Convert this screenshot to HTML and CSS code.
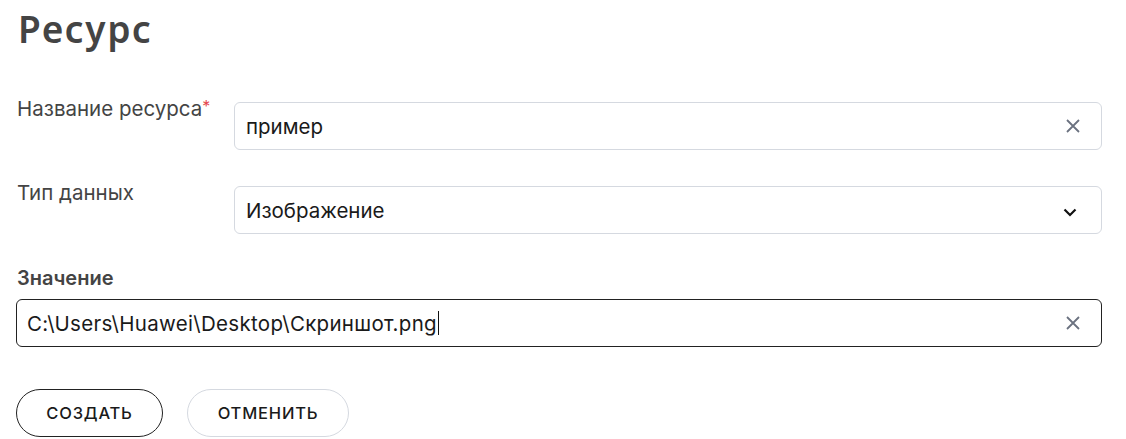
FILE: index.html
```html
<!DOCTYPE html>
<html lang="ru">
<head>
<meta charset="utf-8">
<link rel="stylesheet" href="styles.css">
</head>
<body>
<div class="page">
  <h1 class="title">Ресурс</h1>
  <div class="row row-first">
    <label class="label">Название ресурса<span class="req">*</span></label>
    <div class="field">
      <span class="value">пример</span>
      <svg class="icon-x" width="16" height="16" viewBox="0 0 16 16"><path d="M2 2L14 14M14 2L2 14" stroke="#6b7280" stroke-width="1.8" fill="none"/></svg>
    </div>
  </div>
  <div class="row">
    <label class="label">Тип данных</label>
    <div class="field">
      <span class="value">Изображение</span>
      <svg class="icon-chev" width="14" height="9" viewBox="0 0 14 9"><path d="M1.5 1.5L7 7L12.5 1.5" stroke="#111" stroke-width="2.2" fill="none"/></svg>
    </div>
  </div>
  <div class="block">
    <div class="label-bold">Значение</div>
    <div class="field field-focus">
      <span class="value value-path">C:\Users\Huawei\Desktop\Скриншот.png<span class="caret"></span></span>
      <svg class="icon-x" width="16" height="16" viewBox="0 0 16 16"><path d="M2 2L14 14M14 2L2 14" stroke="#6b7280" stroke-width="1.8" fill="none"/></svg>
    </div>
  </div>
  <div class="actions">
    <button class="btn btn-primary">СОЗДАТЬ</button>
    <button class="btn btn-secondary">ОТМЕНИТЬ</button>
  </div>
</div>
</body>
</html>
```
FILE: styles.css
```css
* { box-sizing: border-box; }
html, body { margin: 0; padding: 0; background: #fff; }
body { font-family: Inter, "Noto Sans", sans-serif; color: #1f1f1f; }
.page { width: 1102px; padding: 0 0 0 16px; }
.title {
  font-family: "Noto Sans", sans-serif;
  font-weight: 600;
  font-size: 37px;
  color: #444;
  margin: 0;
  padding-top: 3px;
  height: 54px;
  letter-spacing: 1.6px;
  padding-left: 2px;
}
.row { display: flex; align-items: flex-start; margin-top: 36px; }
.row-first { margin-top: 48px; }
.label {
  width: 218px;
  flex: none;
  font-size: 20.5px;
  color: #444;
  padding-left: 1px;
  margin-top: -6px;
  line-height: 26px;
}
.req { color: #e5484d; font-size: 16px; vertical-align: top; position: relative; top: -3px; }
.field {
  flex: 1;
  height: 48px;
  border: 1px solid #d5d9e0;
  border-radius: 6px;
  display: flex;
  align-items: center;
  justify-content: space-between;
  padding: 0 20px 0 11px;
}
.value { font-size: 20.5px; color: #1a1a1a; display: flex; align-items: center; }
.value-path { letter-spacing: 0.3px; }
.icon-chev { margin-right: 4px; margin-top: 4px; }
.block { margin-top: 31px; }
.label-bold { font-size: 20px; font-weight: 600; color: #444; padding-left: 1px; line-height: 26px; margin-bottom: 8px; }
.field-focus { border-color: #222; padding-left: 10px; }
.caret { display: inline-block; width: 1px; height: 24px; background: #111; margin-left: 1px; }
.actions { display: flex; gap: 24px; margin-top: 42px; }
.btn {
  height: 48px;
  border-radius: 24px;
  background: #fff;
  font-family: Inter, sans-serif;
  font-size: 16.5px;
  font-weight: 500;
  letter-spacing: 0.8px;
  color: #1a1a1a;
  padding: 0;
  cursor: pointer;
}
.btn-primary { border: 1px solid #222; width: 147px; }
.btn-secondary { border: 1px solid #d5d9e0; width: 162px; }
```
